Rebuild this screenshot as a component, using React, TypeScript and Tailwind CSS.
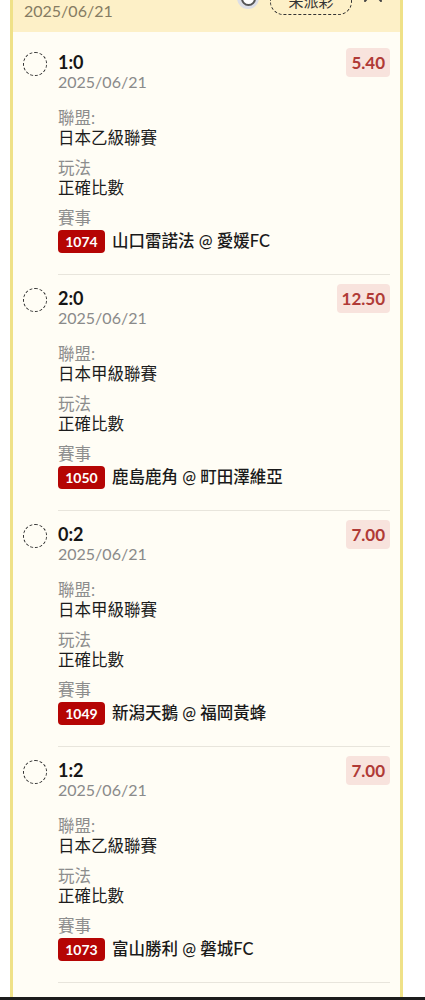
const picks = [
  { score: "1:0", odds: "5.40", league: "日本乙級聯賽", no: "1074", match: "山口雷諾法 @ 愛媛FC" },
  { score: "2:0", odds: "12.50", league: "日本甲級聯賽", no: "1050", match: "鹿島鹿角 @ 町田澤維亞" },
  { score: "0:2", odds: "7.00", league: "日本甲級聯賽", no: "1049", match: "新潟天鵝 @ 福岡黃蜂" },
  { score: "1:2", odds: "7.00", league: "日本乙級聯賽", no: "1073", match: "富山勝利 @ 磐城FC" },
];

const PickRow = ({ pick, first }: { pick: (typeof picks)[number]; first: boolean }) => {
  return (
    <div className="flex gap-[11px] px-[10px]">
      <div className={`${first ? "pt-[20px]" : "pt-[13px]"} shrink-0`}>
        <div className="w-[24px] h-[24px] rounded-full border border-dashed border-[#333]"></div>
      </div>
      <div className={`flex-1 border-b border-[#e8e5dc] pb-[21px] ${first ? "pt-[16px]" : "pt-[9px]"}`}>
        <div className="flex justify-between items-start">
          <div>
            <div className="mt-[4px] text-[18px] leading-[20px] font-bold text-[#161616]">{pick.score}</div>
            <div className="text-[16px] leading-[20px] text-[#8a8a8a]">2025/06/21</div>
          </div>
          <span className="h-[29px] px-[5px] rounded-[4px] bg-[#f8e3dd] text-[17px] leading-[29px] font-bold text-[#b03a36]">
            {pick.odds}
          </span>
        </div>
        <div className="mt-[16px] text-[16.5px] leading-[20px] text-[#8d8d8d]">聯盟:</div>
        <div className="text-[16.5px] leading-[20px] text-[#1c1c1c]">{pick.league}</div>
        <div className="mt-[10px] text-[16.5px] leading-[20px] text-[#8d8d8d]">玩法</div>
        <div className="text-[16.5px] leading-[20px] text-[#1c1c1c]">正確比數</div>
        <div className="mt-[10px] text-[16.5px] leading-[20px] text-[#8d8d8d]">賽事</div>
        <div className="mt-[2px] flex items-center gap-[7px]">
          <span className="h-[23px] w-[47px] rounded-[4px] bg-[#b50504] text-center text-[14px] leading-[23px] font-bold text-white">
            {pick.no}
          </span>
          <span className="text-[16.5px] leading-[23px] font-medium text-[#1a1a1a]">{pick.match}</span>
        </div>
      </div>
    </div>
  );
};

export default function App() {
  return (
    <div className="relative w-[425px] h-[1000px] overflow-hidden bg-white font-[Lato,'Noto_Sans_CJK_TC',sans-serif]">
      <div className="ml-[10px] mr-[22px] border-x-[3px] border-[#efe188] bg-[#fffdf5] pb-[20px]">
        <div className="flex justify-between items-start bg-[#fdf0c7] pl-[11px] pr-[17px] pt-[1px] pb-[11px]">
          <div className="text-[16px] leading-[20px] text-[#857b62]">2025/06/21</div>
          <div className="flex items-center gap-[11px] -mt-[14px]">
            <div className="mb-[7px] w-[22px] h-[22px] rounded-full bg-[#dcdee6] flex items-center justify-center">
              <div className="w-[15px] h-[15px] rounded-full border-2 border-[#555] bg-white"></div>
            </div>
            <div className="h-[27px] w-[82px] rounded-full border border-dashed border-[#333] text-center text-[15px] leading-[25px] text-[#333]">
              未派彩
            </div>
            <svg className="mb-[11px]" width="20" height="14" viewBox="0 0 20 14" fill="none" stroke="#444" strokeWidth="2" strokeLinecap="round">
              <path d="M2 12 L10 3 L18 12" />
            </svg>
          </div>
        </div>
        {picks.map((p, i) => (
          <PickRow key={i} pick={p} first={i === 0} />
        ))}
      </div>
      <div className="absolute bottom-0 left-0 right-0 h-[3px] bg-[#1c1c1c]"></div>
    </div>
  );
}
